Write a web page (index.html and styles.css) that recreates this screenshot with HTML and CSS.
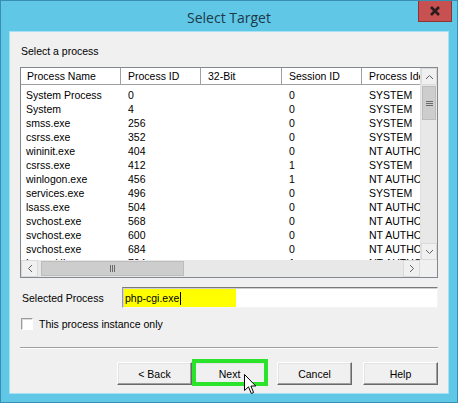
FILE: index.html
```html
<!DOCTYPE html>
<html lang="en">
<head>
    <meta charset="UTF-8">
    <title>Select Target</title>
    <link rel="stylesheet" href="styles.css">
</head>
<body>
    <div class="window">
        <div class="titlebar">
            <span class="title">Select Target</span>
            <div class="close">
                <svg width="12" height="10" viewBox="0 0 12 10">
                    <path d="M2 1 L10 9 M10 1 L2 9" stroke="#2b1d1d" stroke-width="2.6" fill="none"/>
                </svg>
            </div>
        </div>

        <div class="dialog">
            <div class="caption">Select a process</div>

            <div class="listview">
                <div class="lv-viewport">
                    <div class="lv-row lv-header">
                        <div class="cell">Process Name</div>
                        <div class="cell">Process ID</div>
                        <div class="cell">32-Bit</div>
                        <div class="cell">Session ID</div>
                        <div class="cell">Process Identity</div>
                    </div>
                    <div class="lv-rows">
                        <div class="lv-row"><div class="cell">System Process</div><div class="cell">0</div><div class="cell"></div><div class="cell">0</div><div class="cell">SYSTEM</div></div>
                        <div class="lv-row"><div class="cell">System</div><div class="cell">4</div><div class="cell"></div><div class="cell">0</div><div class="cell">SYSTEM</div></div>
                        <div class="lv-row"><div class="cell">smss.exe</div><div class="cell">256</div><div class="cell"></div><div class="cell">0</div><div class="cell">SYSTEM</div></div>
                        <div class="lv-row"><div class="cell">csrss.exe</div><div class="cell">352</div><div class="cell"></div><div class="cell">0</div><div class="cell">SYSTEM</div></div>
                        <div class="lv-row"><div class="cell">wininit.exe</div><div class="cell">404</div><div class="cell"></div><div class="cell">0</div><div class="cell">NT AUTHORITY\SYSTEM</div></div>
                        <div class="lv-row"><div class="cell">csrss.exe</div><div class="cell">412</div><div class="cell"></div><div class="cell">1</div><div class="cell">SYSTEM</div></div>
                        <div class="lv-row"><div class="cell">winlogon.exe</div><div class="cell">456</div><div class="cell"></div><div class="cell">1</div><div class="cell">NT AUTHORITY\SYSTEM</div></div>
                        <div class="lv-row"><div class="cell">services.exe</div><div class="cell">496</div><div class="cell"></div><div class="cell">0</div><div class="cell">SYSTEM</div></div>
                        <div class="lv-row"><div class="cell">lsass.exe</div><div class="cell">504</div><div class="cell"></div><div class="cell">0</div><div class="cell">NT AUTHORITY\SYSTEM</div></div>
                        <div class="lv-row"><div class="cell">svchost.exe</div><div class="cell">568</div><div class="cell"></div><div class="cell">0</div><div class="cell">NT AUTHORITY\SYSTEM</div></div>
                        <div class="lv-row"><div class="cell">svchost.exe</div><div class="cell">600</div><div class="cell"></div><div class="cell">0</div><div class="cell">NT AUTHORITY\SYSTEM</div></div>
                        <div class="lv-row"><div class="cell">svchost.exe</div><div class="cell">684</div><div class="cell"></div><div class="cell">0</div><div class="cell">NT AUTHORITY\SYSTEM</div></div>
                        <div class="lv-row"><div class="cell">LogonUI.exe</div><div class="cell">704</div><div class="cell"></div><div class="cell">1</div><div class="cell">NT AUTHORITY\SYSTEM</div></div>
                    </div>
                </div>

                <div class="vscroll">
                    <div class="sb-btn">
                        <svg width="9" height="6" viewBox="0 0 9 6"><path d="M1 5 L4.5 1.5 L8 5" stroke="#606060" fill="none"/></svg>
                    </div>
                    <div class="sb-thumb v">
                        <svg width="7" height="7" viewBox="0 0 7 7"><path d="M0 1.5 H7 M0 3.5 H7 M0 5.5 H7" stroke="#6a6a6a"/></svg>
                    </div>
                    <div class="sb-track"></div>
                    <div class="sb-btn">
                        <svg width="9" height="6" viewBox="0 0 9 6"><path d="M1 1 L4.5 4.5 L8 1" stroke="#606060" fill="none"/></svg>
                    </div>
                </div>

                <div class="hscroll">
                    <div class="sb-btn">
                        <svg width="6" height="9" viewBox="0 0 6 9"><path d="M5 1 L1.5 4.5 L5 8" stroke="#606060" fill="none"/></svg>
                    </div>
                    <div class="sb-thumb h">
                        <svg width="7" height="7" viewBox="0 0 7 7"><path d="M1.5 0 V7 M3.5 0 V7 M5.5 0 V7" stroke="#6a6a6a"/></svg>
                    </div>
                    <div class="sb-track"></div>
                    <div class="sb-btn">
                        <svg width="6" height="9" viewBox="0 0 6 9"><path d="M1 1 L4.5 4.5 L1 8" stroke="#606060" fill="none"/></svg>
                    </div>
                </div>

                <div class="sb-corner"></div>
            </div>

            <div class="field-row">
                <label class="field-label">Selected Process</label>
                <div class="textbox">
                    <span class="selection">php-cgi.exe<span class="caret"></span></span>
                </div>
            </div>

            <div class="check-row">
                <span class="checkbox"></span>
                <span>This process instance only</span>
            </div>

            <div class="separator"></div>

            <div class="buttons">
                <div class="btn">&lt; Back</div>
                <div class="btn btn-next">
                    Next
                    <svg class="pointer" width="13" height="21" viewBox="0 0 13 21">
                        <path d="M0.5 0.5 L0.5 16.5 L4.5 12.8 L7.3 19.5 L9.6 18.5 L6.9 12 L11.8 12 Z" fill="#fff" stroke="#000" stroke-width="1"/>
                    </svg>
                </div>
                <div class="btn btn-cancel">Cancel</div>
                <div class="btn btn-help">Help</div>
            </div>
        </div>
    </div>
</body>
</html>
```

FILE: styles.css
```css
:root {
    --frame: #61c7e7;
    --frame-edge: #3790b3;
    --face: #f0f0f0;
    --grid-line: #a0a0a0;
    --text: #000000;
}

* {
    margin: 0;
    padding: 0;
    box-sizing: border-box;
}

body {
    width: 458px;
    height: 403px;
    overflow: hidden;
    font-family: 'Liberation Sans', Arial, sans-serif;
    font-size: 10.5px;
    color: var(--text);
    background: #ffffff;
}

.window {
    width: 458px;
    height: 403px;
    background: var(--frame);
    border: 1px solid var(--frame-edge);
    display: flex;
    flex-direction: column;
}

/* title bar: title centred over the whole width, close box at the right */
.titlebar {
    height: 31px;
    display: grid;
    grid-template-columns: 1fr auto 1fr;
}

.title {
    grid-column: 2;
    align-self: center;
    font-family: 'Open Sans', 'Liberation Sans', sans-serif;
    font-size: 14px;
    color: #1c3a48;
    padding-top: 1px;
}

.close {
    grid-column: 3;
    justify-self: end;
    align-self: start;
    width: 34px;
    height: 21px;
    margin-right: 5px;
    background: #c75050;
    border: 1px solid #8c3434;
    border-top: none;
    display: flex;
    align-items: center;
    justify-content: center;
}

.dialog {
    flex: 1;
    margin: 0 9px 9px;
    background: var(--face);
    box-shadow: 0 0 0 1px #a6e0f3;
    padding: 12px 10px 8px;
    display: flex;
    flex-direction: column;
}

.caption {
    height: 14px;
    line-height: 14px;
    margin-bottom: 9px;
    padding-left: 1px;
}

/* list view */
.listview {
    height: 211px;
    border: 1px solid #828790;
    background: #ffffff;
    display: grid;
    grid-template-columns: 1fr 17px;
    grid-template-rows: 1fr 17px;
}

.lv-viewport {
    overflow: hidden;
}

.lv-row {
    display: grid;
    grid-template-columns: 100px 80px 81px 80px 1fr;
    height: 14px;
    line-height: 14px;
}

.lv-header {
    height: 17px;
    line-height: 16px;
}

.lv-header .cell {
    border-right: 1px solid var(--grid-line);
    border-bottom: 1px solid var(--grid-line);
    padding-left: 7px;
}

.lv-header .cell:first-child {
    padding-left: 6px;
}

.lv-header .cell:last-child {
    border-right: none;
}

.lv-rows {
    padding-top: 3px;
}

.cell {
    overflow: hidden;
    white-space: nowrap;
    padding-left: 7px;
}

.cell:first-child {
    padding-left: 5px;
}

/* scroll bars */
.vscroll, .hscroll {
    display: flex;
    background: #e8e8e8;
}

.vscroll {
    flex-direction: column;
    border-left: 1px solid #e0e0e0;
}

.sb-btn {
    flex: 0 0 17px;
    display: flex;
    align-items: center;
    justify-content: center;
    background: var(--face);
    border: 1px solid #dadada;
}

.sb-thumb {
    display: flex;
    align-items: center;
    justify-content: center;
    background: #cdcdcd;
    border: 1px solid #bcbcbc;
}

.sb-thumb.v {
    flex: 0 0 34px;
    margin: 1px 1px 0;
}

.sb-thumb.h {
    flex: 0 0 143px;
    margin: 1px 0 1px 3px;
}

.sb-track {
    flex: 1;
}

.sb-corner {
    background: var(--face);
}

/* selected process field */
.field-row {
    margin-top: 9px;
    height: 21px;
    display: flex;
    align-items: center;
}

.field-label {
    width: 102px;
    padding-left: 2px;
}

.textbox {
    flex: 1;
    height: 21px;
    background: #ffffff;
    border: 1px solid;
    border-color: #7a7a7a #f4f4f4 #f4f4f4 #9a9a9a;
    box-shadow: inset 1px 1px 0 #d0d0d0;
    padding: 1px 0 0 1px;
}

.selection {
    display: flex;
    align-items: center;
    width: 112px;
    height: 18px;
    background: #ffff00;
    padding-left: 1px;
}

.caret {
    display: inline-block;
    width: 1px;
    height: 13px;
    background: #000000;
    margin-left: 1px;
}

.check-row {
    margin-top: 9px;
    height: 13px;
    display: flex;
    align-items: center;
    gap: 6px;
    padding-left: 1px;
}

.checkbox {
    width: 12px;
    height: 12px;
    background: #ffffff;
    border: 1px solid;
    border-color: #9c9c9c #ffffff #ffffff #9c9c9c;
    box-shadow: inset 1px 1px 0 #dcdcdc;
}

.separator {
    margin-top: 17px;
    height: 2px;
    border-top: 1px solid #a0a0a0;
    border-bottom: 1px solid #ffffff;
}

/* wizard buttons */
.buttons {
    margin-top: 13px;
    display: flex;
    justify-content: flex-end;
}

.btn {
    position: relative;
    width: 75px;
    height: 23px;
    display: flex;
    align-items: center;
    justify-content: center;
    background: var(--face);
    border: 1px solid;
    border-color: #ffffff #696969 #696969 #ffffff;
    box-shadow: inset -1px -1px 0 #a0a0a0, inset 1px 1px 0 #e3e3e3;
}

.btn-cancel {
    margin-left: 10px;
}

.btn-help {
    margin-left: 11px;
}

.btn-next::after {
    content: '';
    position: absolute;
    top: -4px;
    left: -1px;
    right: -2px;
    bottom: -2px;
    border: 4px solid #2be32b;
}

.pointer {
    position: absolute;
    left: 51px;
    top: 11px;
    z-index: 2;
}
```
